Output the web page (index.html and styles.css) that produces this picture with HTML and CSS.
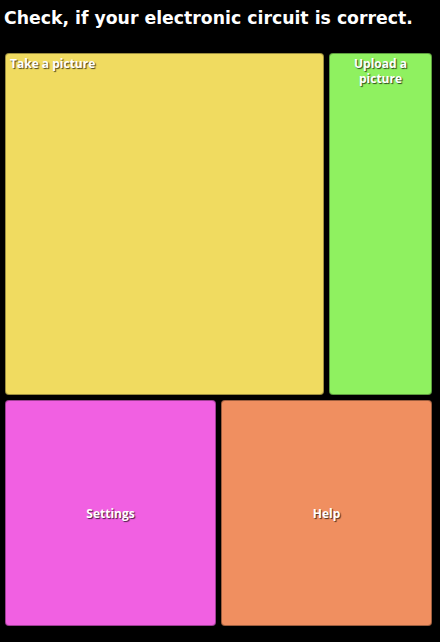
FILE: index.html
```html
<!DOCTYPE html>
<html>
<head>
<meta charset="utf-8">
<link rel="stylesheet" href="styles.css">
</head>
<body>
<h1 class="title">Check, if your electronic circuit is correct.</h1>
<div class="grid">
  <div class="btn take">Take a picture</div>
  <div class="btn upload">Upload a picture</div>
  <div class="bottom">
    <div class="btn settings">Settings</div>
    <div class="btn help">Help</div>
  </div>
</div>
</body>
</html>
```

FILE: styles.css
```css
html, body {
  margin: 0;
  padding: 0;
  background: #000;
  height: 100%;
}
body {
  width: 440px;
  height: 642px;
  overflow: hidden;
}
.title {
  margin: 0;
  padding: 7px 0 0 4px;
  height: 46px;
  box-sizing: border-box;
  font-family: "DejaVu Sans", sans-serif;
  font-weight: bold;
  font-size: 17.3px;
  line-height: 22px;
  color: #fff;
}
.grid {
  display: grid;
  grid-template-columns: 319px 103px;
  grid-template-rows: 342px 226px;
  gap: 5px;
  padding: 7px 8px 0 5px;
}
.bottom {
  grid-column: 1 / 3;
  display: grid;
  grid-template-columns: 1fr 1fr;
  gap: 5px;
}
.btn {
  border-radius: 4px;
  border: 1px solid rgba(0,0,0,0.35);
  box-sizing: border-box;
  font-family: "Open Sans", sans-serif;
  font-weight: bold;
  font-size: 12px;
  line-height: 15px;
  color: #fff;
  text-shadow: 1px 1px 1px rgba(0,0,0,0.7);
}
.take {
  background: #f0db60;
  padding: 2px 4px;
}
.upload {
  background: #8ff160;
  text-align: center;
  padding: 2px 16px;
}
.settings, .help {
  display: flex;
  align-items: center;
  justify-content: center;
}
.settings {
  background: #f160e2;
}
.help {
  background: #f08f60;
}
```
